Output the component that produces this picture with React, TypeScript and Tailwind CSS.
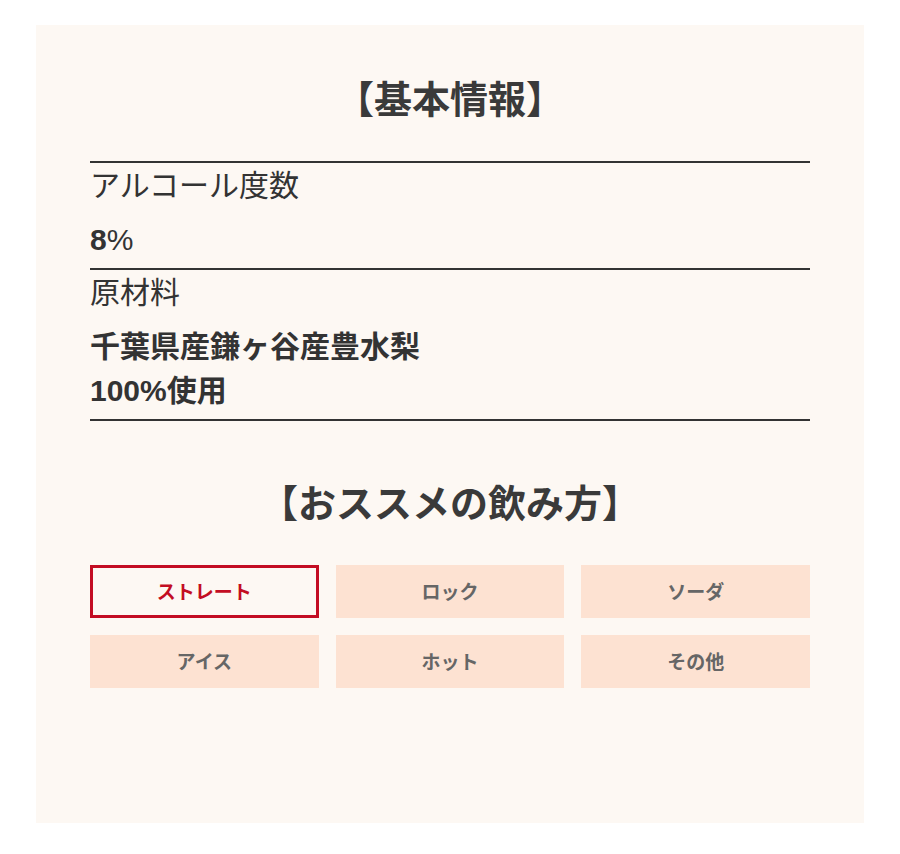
import React from 'react'

const STYLES = [
  { label: 'ストレート', active: true },
  { label: 'ロック' },
  { label: 'ソーダ' },
  { label: 'アイス' },
  { label: 'ホット' },
  { label: 'その他' },
]

const FONT = "font-['Liberation_Sans','Noto_Sans_CJK_JP',sans-serif]"

function InfoRow({ label, children }: { label: string; children: React.ReactNode }) {
  return (
    <div className="border-t-2 border-[#333] pt-[3px] pb-[6px]">
      <p className="text-[30px] leading-[40px] text-[#333]">{label}</p>
      <div className="mt-[12px] text-[30px] leading-[44px] font-bold text-[#333]">{children}</div>
    </div>
  )
}

export default function App() {
  return (
    <div className={`min-h-[854px] bg-white pt-[25px] pb-[31px] px-[36px] ${FONT}`}>
      <div className="bg-[#fdf8f3] px-[54px] pt-[50px] pb-[135px]">
        <h2 className="text-center text-[38px] leading-[50px] font-bold text-[#3a3a3a]">【基本情報】</h2>

        <div className="mt-[36px] border-b-2 border-[#333]">
          <InfoRow label="アルコール度数">
            <p>8<span className="font-normal">%</span></p>
          </InfoRow>
          <InfoRow label="原材料">
            <p>千葉県産鎌ヶ谷産豊水梨</p>
            <p>100%使用</p>
          </InfoRow>
        </div>

        <h2 className="mt-[58px] text-center text-[38px] leading-[50px] font-bold text-[#3a3a3a]">【おススメの飲み方】</h2>

        <div className="mt-[36px] grid grid-cols-3 gap-x-[17px] gap-y-[17px]">
          {STYLES.map(s => (
            <button
              key={s.label}
              className={
                s.active
                  ? 'h-[53px] pt-[3px] border-[3px] border-[#c30d23] bg-[#fdf8f3] text-[19px] font-bold text-[#c30d23]'
                  : 'h-[53px] pt-[3px] bg-[#fde2d2] text-[19px] font-bold text-[#666]'
              }
            >
              {s.label}
            </button>
          ))}
        </div>
      </div>
    </div>
  )
}
